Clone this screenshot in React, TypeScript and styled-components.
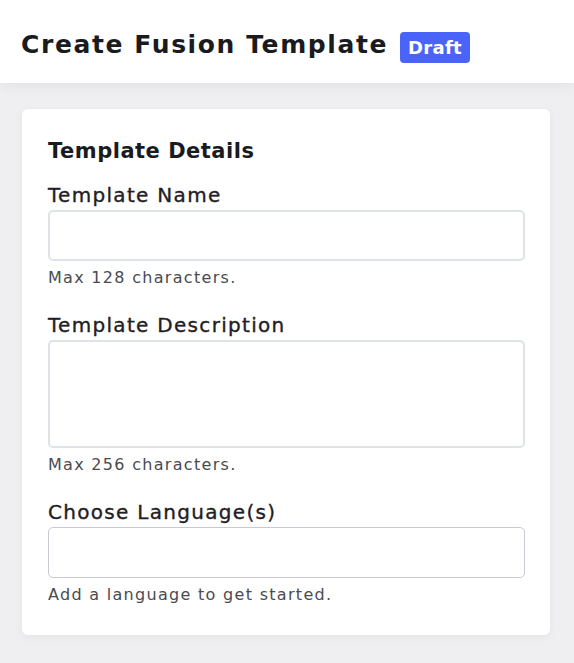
import React from 'react'
import styled, { createGlobalStyle } from 'styled-components'

const GlobalStyle = createGlobalStyle`
  body {
    margin: 0;
    background: #efeff1;
    font-family: 'DejaVu Sans', 'Noto Sans', sans-serif;
    color: #1c1d21;
  }
  * {
    box-sizing: border-box;
  }
`

export default function App() {
  return (
    <>
      <GlobalStyle />
      <Header>
        <Title>Create Fusion Template</Title>
        <Badge>Draft</Badge>
      </Header>
      <Main>
        <Card>
          <CardTitle>Template Details</CardTitle>
          <Field>
            <Label htmlFor="name">Template Name</Label>
            <Input id="name" type="text" />
            <Help>Max 128 characters.</Help>
          </Field>
          <Field>
            <Label htmlFor="desc">Template Description</Label>
            <TextArea id="desc" />
            <Help>Max 256 characters.</Help>
          </Field>
          <Field>
            <Label htmlFor="lang">Choose Language(s)</Label>
            <Input id="lang" type="text" muted />
            <Help>Add a language to get started.</Help>
          </Field>
        </Card>
      </Main>
    </>
  )
}

const Header = styled.header`
  height: 83px;
  background: #fff;
  display: flex;
  align-items: center;
  padding: 6px 0 0 21px;
  box-shadow: 0 3px 12px rgba(0, 0, 0, 0.06);
  position: relative;
`

const Title = styled.h1`
  margin: 0;
  font-size: 25px;
  font-weight: 700;
  letter-spacing: 1.6px;
  color: #1a1b1f;
`

const Badge = styled.span`
  margin: 6px 0 0 12px;
  height: 31px;
  padding: 0 8px;
  display: inline-flex;
  align-items: center;
  border-radius: 4px;
  background: #4a64fa;
  color: #fff;
  font-size: 18px;
  font-weight: 700;
  letter-spacing: 0.3px;
`

const Main = styled.main`
  padding: 26px 24px 29px 22px;
`

const Card = styled.section`
  background: #fff;
  border-radius: 6px;
  padding: 28px 25px 28px 26px;
  box-shadow: 0 2px 8px rgba(0, 0, 0, 0.05);
  display: flex;
  flex-direction: column;
`

const CardTitle = styled.h2`
  margin: 0 0 16px;
  font-size: 21px;
  line-height: 28px;
  font-weight: 700;
  letter-spacing: 0.5px;
  color: #1a1b1f;
`

const Field = styled.div`
  display: flex;
  flex-direction: column;
  margin-bottom: 21px;

  &:last-child {
    margin-bottom: 0;
  }
`

const Label = styled.label`
  font-size: 20px;
  line-height: 28px;
  font-weight: 400;
  letter-spacing: 1.3px;
  -webkit-text-stroke: 0.35px currentColor;
  color: #1f2024;
  margin-bottom: 1px;
`

const Input = styled.input<{ muted?: boolean }>`
  height: 51px;
  border: ${(p) => (p.muted ? '1px solid #c9cad1' : '2px solid #dfe2e6')};
  border-radius: 5px;
  background: #fff;
  outline: none;
  padding: 0 12px;
  font: inherit;
`

const TextArea = styled.textarea`
  height: 108px;
  border: 2px solid #dfe2e6;
  border-radius: 5px;
  background: #fff;
  outline: none;
  resize: none;
  padding: 10px 12px;
  font: inherit;
`

const Help = styled.p`
  margin: 5px 0 0;
  font-size: 16px;
  line-height: 24px;
  letter-spacing: 1.3px;
  color: #4a4b51;
`
